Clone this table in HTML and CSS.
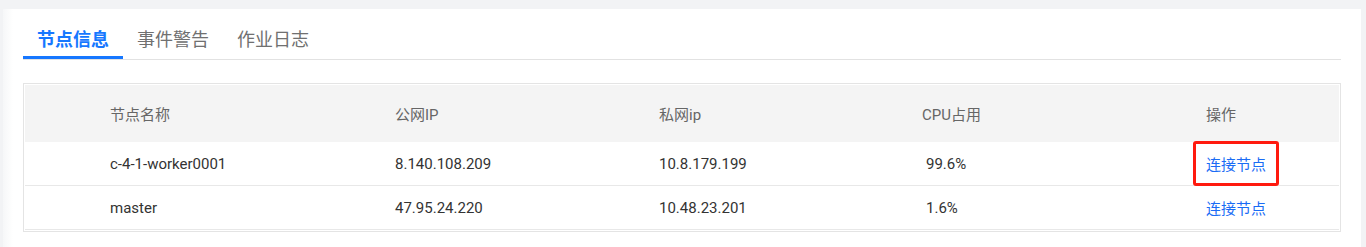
FILE: index.html
```html
<!DOCTYPE html>
<html lang="zh">
<head>
<meta charset="utf-8">
<link rel="stylesheet" href="styles.css">
</head>
<body>
<div class="panel">
  <nav class="tabs">
    <div class="tab active">节点信息</div>
    <div class="tab">事件警告</div>
    <div class="tab">作业日志</div>
  </nav>
  <div class="table-wrap">
    <div class="table">
      <div class="row head">
        <div class="c c1">节点名称</div>
        <div class="c c2">公网IP</div>
        <div class="c c3">私网ip</div>
        <div class="c c4">CPU占用</div>
        <div class="c c5">操作</div>
      </div>
      <div class="row">
        <div class="c c1">c-4-1-worker0001</div>
        <div class="c c2">8.140.108.209</div>
        <div class="c c3">10.8.179.199</div>
        <div class="c c4 val">99.6%</div>
        <div class="c c5"><span class="link marked">连接节点</span></div>
      </div>
      <div class="row">
        <div class="c c1">master</div>
        <div class="c c2">47.95.24.220</div>
        <div class="c c3">10.48.23.201</div>
        <div class="c c4 val">1.6%</div>
        <div class="c c5"><span class="link">连接节点</span></div>
      </div>
    </div>
  </div>
</div>
</body>
</html>
```
FILE: styles.css
```css
html, body {
  margin: 0;
  padding: 0;
}
body {
  background: #f2f3f5;
  font-family: Roboto, "Noto Sans CJK SC", sans-serif;
  width: 1366px;
  height: 247px;
  overflow: hidden;
}
.panel {
  margin: 9px 0 0 3px;
  width: 1318px;
  height: 238px;
  background: linear-gradient(to right, #f6f7f8 0, #ffffff 10px);
  padding: 0 20px;
}
.tabs {
  display: flex;
  padding-top: 19px;
  border-bottom: 1px solid #e2e2e2;
}
.tab {
  width: 100px;
  text-align: center;
  font-size: 18px;
  line-height: 24px;
  padding-bottom: 4px;
  border-bottom: 3px solid transparent;
  color: #707070;
}
.tab.active {
  color: #1677ff;
  font-weight: bold;
  border-bottom-color: #1677ff;
}
.table-wrap {
  margin-top: 23px;
  border: 1px solid #e4e4e4;
  padding: 1px;
}
.table {
  display: flex;
  flex-direction: column;
}
.row {
  display: flex;
  align-items: center;
  height: 43px;
  border-bottom: 1px solid #e8e8e8;
  font-size: 15px;
  color: #333;
}
.row.head {
  height: 57px;
  border-bottom: none;
  background: #f4f4f4;
  color: #666;
}
.c1 { width: 285px; padding-left: 85px; }
.c2 { width: 264px; }
.c3 { width: 263px; }
.c4 { width: 284px; }
.c5 { flex: 1; }
.val { padding-left: 4px; width: 280px; }
.link {
  color: #1a6cf5;
  position: relative;
}
.marked::after {
  content: "";
  position: absolute;
  left: -13px;
  top: -15px;
  width: 80px;
  height: 39px;
  border: 3px solid #ff1a0f;
  border-radius: 3px;
}
```
